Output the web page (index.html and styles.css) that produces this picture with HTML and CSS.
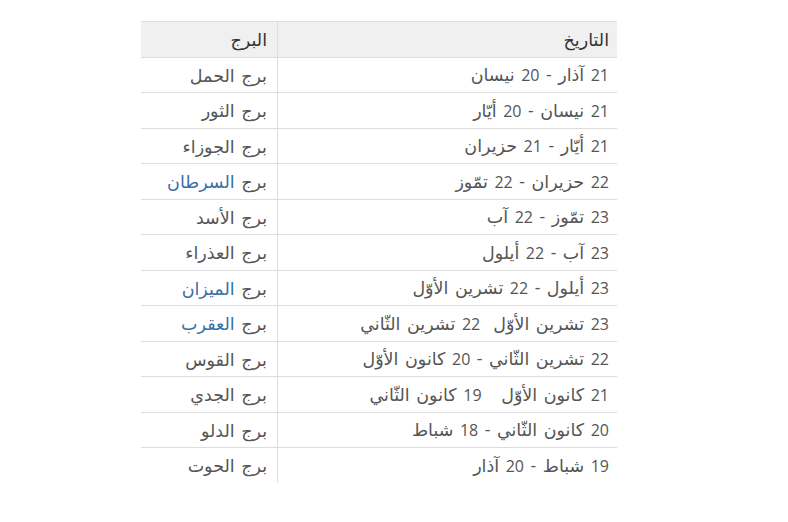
FILE: index.html
```html
<!DOCTYPE html>
<html lang="ar">
<head>
<meta charset="utf-8">
<link rel="stylesheet" href="styles.css">
</head>
<body>
<div class="page">
<table class="zodiac" dir="rtl">
<thead>
<tr><th class="date">التاريخ</th><th class="sign">البرج</th></tr>
</thead>
<tbody>
<tr><td class="date"><span class="num">21</span> آذار - <span class="num">20</span> نيسان</td><td class="sign">برج الحمل</td></tr>
<tr><td class="date"><span class="num">21</span> نيسان - <span class="num">20</span> أيّار</td><td class="sign">برج الثور</td></tr>
<tr><td class="date"><span class="num">21</span> أيّار - <span class="num">21</span> حزيران</td><td class="sign">برج الجوزاء</td></tr>
<tr><td class="date"><span class="num">22</span> حزيران - <span class="num">22</span> تمّوز</td><td class="sign">برج <a class="link">السرطان</a></td></tr>
<tr><td class="date"><span class="num">23</span> تمّوز - <span class="num">22</span> آب</td><td class="sign">برج الأسد</td></tr>
<tr><td class="date"><span class="num">23</span> آب - <span class="num">22</span> أيلول</td><td class="sign">برج العذراء</td></tr>
<tr><td class="date"><span class="num">23</span> أيلول - <span class="num">22</span> تشرين الأوّل</td><td class="sign">برج <a class="link">الميزان</a></td></tr>
<tr><td class="date"><span class="num">23</span> تشرين الأوّل&nbsp; <span class="num">22</span> تشرين الثّاني</td><td class="sign">برج <a class="link">العقرب</a></td></tr>
<tr><td class="date"><span class="num">22</span> تشرين الثّاني - <span class="num">20</span> كانون الأوّل</td><td class="sign">برج القوس</td></tr>
<tr><td class="date"><span class="num">21</span> كانون الأوّل&nbsp;&nbsp; <span class="num">19</span> كانون الثّاني</td><td class="sign">برج الجدي</td></tr>
<tr><td class="date"><span class="num">20</span> كانون الثّاني - <span class="num">18</span> شباط</td><td class="sign">برج الدلو</td></tr>
<tr><td class="date"><span class="num">19</span> شباط - <span class="num">20</span> آذار</td><td class="sign">برج الحوت</td></tr>
</tbody>
</table>
</div>
</body>
</html>
```
FILE: styles.css
```css
html, body {
  margin: 0;
  padding: 0;
  background: #ffffff;
}
.page {
  padding: 21px 0 0 141px;
}
.zodiac {
  width: 476px;
  border-collapse: collapse;
  font-family: "Open Sans", "DejaVu Sans", sans-serif;
  font-size: 17.5px;
  word-spacing: 2px;
  color: #555555;
}
.zodiac th, .zodiac td {
  height: 34.5px;
  padding: 0 8px 0 10px;
  text-align: right;
  vertical-align: middle;
  border-top: 1px solid #dddddd;
  border-left: 1px solid #dddddd;
  line-height: 20px;
}
.zodiac th {
  background: #f0f0f0;
  color: #333333;
  font-weight: normal;
}
.zodiac .date {
  width: 321px;
}
.zodiac .sign {
  border-left: none;
  padding-right: 10px;
}
.zodiac .num {
  font-size: 16px;
}
.zodiac .link {
  color: #3b6ea5;
}
```
